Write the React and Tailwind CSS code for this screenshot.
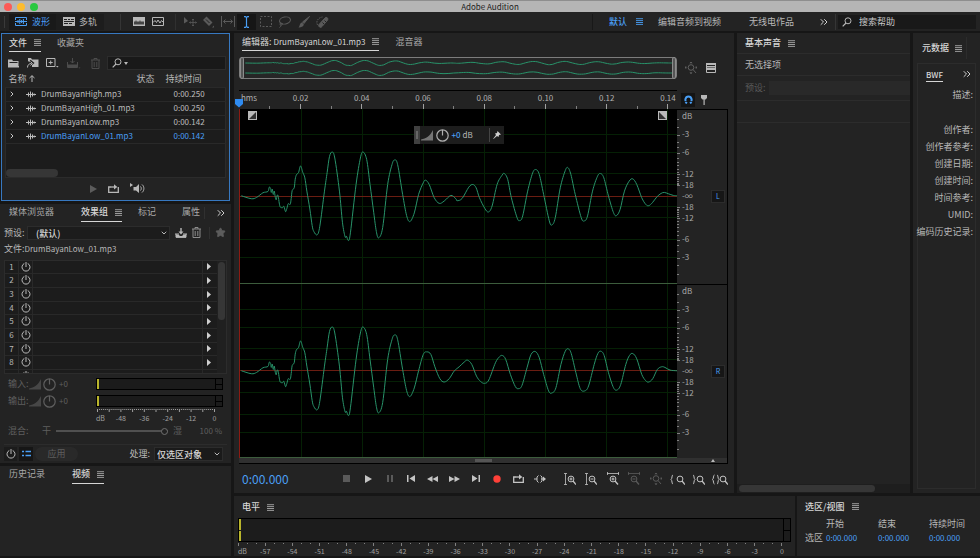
import React, { useState } from "react";
import { ChevronDown, ChevronRight, ChevronsRight, Star } from "lucide-react";
import clsx from "clsx";

// Sample points of the clip: [time, amplitude], full scale is +-262
const ATTACK = [
  [4, 0], [34, 9], [50, 5], [69, -9], [84, -13], [88, -26], [92, -22], [94, -10], [97, -20],
  [100, -4], [103, -14], [106, 4], [109, 12], [112, -2], [115, 2], [118, 22], [121, 34],
  [128, 36], [132, 32], [137, 48], [141, 38], [145, 24], [151, 26], [154, 8], [157, -16],
  [163, -24], [166, -50], [170, -64], [176, -70], [182, -90], [189, -70], [195, -54],
  [201, -14], [210, 40], [217, 90], [222, 108], [232, 118], [240, 92], [254, -14], [262, -70],
  [269, -118], [277, -132], [285, -114], [299, -14], [308, 80], [316, 124], [320, 122],
  [326, 135], [332, 112], [349, -34], [362, -114], [370, -132], [381, -109], [391, -34],
  [402, 50], [410, 108], [417, 127], [429, 96], [444, -34], [457, -94], [465, -108],
  [474, -94], [489, -4], [501, 60], [511, 78], [524, 52]
];

const LEFT = [
  ...ATTACK,
  [537, -4], [551, -39], [558, -47], [569, -34], [584, 6], [599, 23], [614, 16], [634, -1],
  [649, 9], [653, 15], [668, 8], [688, -26], [700, -34], [710, -24], [720, 6], [736, 38],
  [747, 49], [758, 31], [773, -34], [788, -62], [795, -67], [805, -49], [816, 6], [833, 66],
  [841, 75], [850, 61], [865, -14], [880, -69], [890, -79], [900, -64], [913, -4], [930, 76],
  [938, 88], [948, 66], [963, -24], [978, -76], [986, -85], [995, -64], [1008, -4], [1026, 66],
  [1035, 76], [1045, 61], [1060, -14], [1075, -59], [1084, -67], [1094, -54], [1108, 1],
  [1123, 51], [1132, 60], [1143, 41], [1156, -14], [1170, -44], [1181, -51], [1193, -34],
  [1208, 6], [1220, 26], [1229, 30], [1240, 21], [1253, 4], [1266, -7], [1276, -10],
  [1288, -6], [1303, -1], [1314, 0]
];

const RIGHT = [
  ...ATTACK,
  [537, 0], [551, -49], [562, -57], [574, -49], [586, -12], [601, 24], [614, 34], [629, 24],
  [644, 1], [659, -12], [674, -26], [684, -32], [697, -19], [711, 16], [723, 32], [735, 38],
  [748, 28], [768, -24], [780, -42], [789, -46], [799, -34], [813, 11], [828, 48], [838, 54],
  [848, 44], [863, -9], [875, -49], [888, -58], [900, -39], [913, 11], [928, 61], [938, 67],
  [950, 51], [965, -19], [978, -59], [987, -66], [996, -52], [1010, 6], [1023, 54], [1036, 61],
  [1048, 46], [1065, -19], [1076, -52], [1085, -59], [1095, -46], [1108, 6], [1123, 51],
  [1134, 58], [1145, 41], [1160, -19], [1171, -46], [1181, -52], [1193, -36], [1208, 11],
  [1220, 30], [1229, 34], [1241, 24], [1255, -4], [1268, -12], [1278, -10], [1293, -2], [1314, 0]
];

const FILES = [
  { name: "DrumBayanHigh.mp3", duration: "0:00.250" },
  { name: "DrumBayanHigh_01.mp3", duration: "0:00.250" },
  { name: "DrumBayanLow.mp3", duration: "0:00.142" },
  { name: "DrumBayanLow_01.mp3", duration: "0:00.142" }
];

const META_FIELDS = ["创作者:", "创作者参考:", "创建日期:", "创建时间:", "时间参考:", "UMID:", "编码历史记录:"];

const TIMES = ["0.02", "0.04", "0.06", "0.08", "0.10", "0.12", "0.14"];
const timeX = (i) => `${((i * 183.7 + 1) / 1314) * 100}%`;

const gain = (db) => Math.pow(10, db / 20);

// Catmull-Rom through the samples
function toPath(points) {
  let d = `M${points[0][0]} ${points[0][1]}`;
  for (let i = 0; i < points.length - 1; i++) {
    const p0 = points[i - 1] || points[i];
    const p1 = points[i];
    const p2 = points[i + 1];
    const p3 = points[i + 2] || p2;
    d += `C${p1[0] + (p2[0] - p0[0]) / 6} ${p1[1] + (p2[1] - p0[1]) / 6} ${p2[0] - (p3[0] - p1[0]) / 6} ${p2[1] - (p3[1] - p1[1]) / 6} ${p2[0]} ${p2[1]}`;
  }
  return d;
}

/* ---------- icons ---------- */

function Icon({ w = 12, h = 12, className, children }) {
  return (
    <svg
      width={w}
      height={h}
      viewBox={`0 0 ${w} ${h}`}
      fill="none"
      stroke="currentColor"
      strokeWidth="1"
      className={clsx("shrink-0", className)}
      aria-hidden="true"
    >
      {children}
    </svg>
  );
}

const MenuIcon = ({ className }) => (
  <Icon w={7} h={7} className={className}>
    <path d="M0 .7h7M0 2.6h7M0 4.5h7M0 6.4h7" strokeWidth=".9" />
  </Icon>
);

const WaveformIcon = () => (
  <Icon w={12} h={9}>
    <path d="M.5 3V.5h11V3M.5 6v2.500h11V6M0 4.500h12M3 3v3M4.800 2v5M6.600 3v3M8.400 2v5" />
  </Icon>
);

const MultitrackIcon = () => (
  <Icon w={12} h={9}>
    <path d="M0 0h12v9H0z" fill="currentColor" stroke="none" />
    <path d="M1 2.500h3M5 2.500h2M8 2.500h3M1 4.500h10M1 6.500h4M6 6.500h3" stroke="#222" />
  </Icon>
);

const SpectralIcon = () => (
  <Icon w={12} h={9}>
    <path d="M0 0h12v9H0z" fill="currentColor" stroke="none" />
    <path d="M1 7.500V4l1 1 1-2 1 2 1-1 1 1 1-2 1 2 1-1 1 1 1-1v3.500z" fill="#444" stroke="none" />
  </Icon>
);

const PitchIcon = () => (
  <Icon w={12} h={9}>
    <path d="M.5.5h11v8H.5zM1 5.500l2-2 1.500 2L6 3l2 3 1.500-2.500L11 5" />
  </Icon>
);

const MoveIcon = () => (
  <Icon w={14} h={11}>
    <path d="M1 1l4 4-4 2.500z" fill="currentColor" stroke="none" />
    <path d="M10 3v7M6.500 6.500h7M9 4l1-1 1 1M9 9l1 1 1-1M7.500 5.500l-1 1 1 1M12.500 5.500l1 1-1 1" strokeWidth=".8" />
  </Icon>
);

const RazorIcon = () => (
  <Icon w={13} h={12}>
    <path d="M1 4l3.500-3.500 6 6L7 10z" fill="currentColor" stroke="none" />
    <path d="M4 3.500l3.500 3.500" stroke="#222" />
    <path d="M10 11.500h2V9.500z" fill="currentColor" stroke="none" />
  </Icon>
);

const SlipIcon = () => (
  <Icon w={14} h={11}>
    <path d="M.5 0v11M13.500 0v11M2.500 5.500h9M4.500 3.500l-2 2 2 2M9.500 3.500l2 2-2 2" />
  </Icon>
);

const CursorIcon = () => (
  <Icon w={7} h={12}>
    <path d="M1 .7h1.500l1 1 1-1H6M1 11.300h1.500l1-1 1 1H6M3.500 1.500v9" strokeWidth="1.200" />
  </Icon>
);

const MarqueeIcon = () => (
  <Icon w={12} h={11}>
    <path d="M.5.5h11v10H.5z" strokeDasharray="2 1.500" />
  </Icon>
);

const LassoIcon = () => (
  <Icon w={13} h={12}>
    <ellipse cx="7" cy="4.500" rx="5.500" ry="3.500" transform="rotate(-12 7 4.500)" />
    <path d="M3.500 7c-2 0-2 2-.5 2s1.500-1 1-2M3 9c0 1-.5 2-1.500 2.500" />
  </Icon>
);

const BrushIcon = () => (
  <Icon w={12} h={12}>
    <path d="M11.500.5L6 7.500 4.500 6z" fill="currentColor" />
    <path d="M4 6.500L5.800 8.300C5.500 11 2.500 11.500.5 11.500 2 10 1.500 7 4 6.500z" fill="currentColor" stroke="none" />
  </Icon>
);

const HealIcon = () => (
  <Icon w={13} h={12}>
    <path d="M3 8.500l6-6.500a1.500 1.500 0 0 1 2.500 2.200L6 10.500A1.500 1.500 0 0 1 3 8.500z" fill="currentColor" />
    <path d="M6.500 6.500l1.500 1.500M8.500 4.500l1.500 1.500" stroke="#222" />
    <path d="M1.500 9c-2-4 1-7.500 5-8" strokeDasharray="1.500 1" />
  </Icon>
);

const SearchIcon = () => (
  <Icon w={10} h={10}>
    <circle cx="6" cy="3.800" r="3" />
    <path d="M4 6L.7 9.300" strokeWidth="1.200" />
  </Icon>
);

const FolderIcon = () => (
  <Icon w={11} h={9}>
    <path d="M0 8.500V.5h4l1 1.500h5.500v5H11v1.500z" fill="currentColor" stroke="none" />
    <path d="M1.500 3.500h8" stroke="#222" />
  </Icon>
);

const ImportIcon = () => (
  <Icon w={12} h={10}>
    <path d="M1 0h3l1 1.500h6.500V9H5V6l-4-3z" fill="currentColor" stroke="none" />
    <path d="M0 9.500c0-3 2-4.500 4.500-4.500M3 2.500l3 2.500-3 2.500" stroke="#222" strokeWidth="2" />
    <path d="M.5 9.500c0-2.500 1.500-4 4-4M3.500 3.500l2 2-2 2" />
  </Icon>
);

const NewIcon = () => (
  <Icon w={13} h={10}>
    <path d="M.5.5h8.500v8H.5zM4.700 2.500v4M2.700 4.500h4" />
    <path d="M10 8h2.600l-1.300 1.500z" fill="currentColor" stroke="none" />
  </Icon>
);

const InsertIcon = () => (
  <Icon w={14} h={11}>
    <path d="M.5 4v5.500h10V4M0 7h11M5.500 0v5M3.500 3l2 2 2-2" />
    <path d="M1 7h9v2.500H1zM11.500 9.500h2l-1 1z" fill="currentColor" stroke="none" />
  </Icon>
);

const TrashIcon = () => (
  <Icon w={9} h={11}>
    <path d="M0 2h9M3 2V.5h3V2M1 2v8.500h7V2M3.200 4v5M5.800 4v5" />
  </Icon>
);

const ClipIcon = () => (
  <Icon w={10} h={7} className="text-[#bcbcbc]">
    <path d="M0 3.500h10M2.500 1.500v4M4.500 .5v6M6.500 1.500v4M8.200 2.500v2" />
  </Icon>
);

const LoopIcon = () => (
  <Icon w={11} h={9}>
    <path d="M3 3H.7v5.300h9.600V3" strokeWidth="1.300" />
    <path d="M3 3h4" strokeWidth="1.300" />
    <path d="M6 .3L9.300 3 6 5.500z" fill="currentColor" stroke="none" />
  </Icon>
);

const AutoPlayIcon = () => (
  <Icon w={15} h={11}>
    <path d="M0 0l3 2-3 2zM3.500 4H6l3-3v9L6 7.500H3.500z" fill="currentColor" stroke="none" />
    <path d="M10.500 3.500c1 1 1 3 0 4M12 1.500c2.500 2 2.500 6 0 8" />
  </Icon>
);

const SaveIcon = () => (
  <Icon w={12} h={10}>
    <path d="M1 6v3.300h10V6M0 6h4M8 6h4" />
    <path d="M1 6.500h2.500L5 8h2l1.500-1.500H11v3H1zM3.500 3.500h5L6 6.500zM5.300 0h1.400v4H5.300z" fill="currentColor" stroke="none" />
  </Icon>
);

const PowerIcon = () => (
  <Icon w={10} h={10}>
    <path d="M3.300 1.500a4 4 0 1 0 3.400 0M5 0v5" />
  </Icon>
);

const ListIcon = () => (
  <Icon w={9} h={7}>
    <path d="M0 1.500h2M3.500 1.500H9M0 5.500h2M3.500 5.500H9" strokeWidth="1.500" />
  </Icon>
);

const RampIcon = () => (
  <Icon w={12} h={11}>
    <path d="M0 10.500V9.500C5 8.500 9 6 12 0v10.500z" fill="currentColor" stroke="none" opacity=".6" />
  </Icon>
);

const KnobIcon = () => (
  <Icon w={13} h={13}>
    <circle cx="6.500" cy="6.500" r="5.700" strokeWidth="1.200" />
    <path d="M6.500 1v5.500" strokeWidth="1.200" />
  </Icon>
);

const ZoomAllIcon = () => (
  <Icon w={12} h={12}>
    <circle cx="6" cy="5.500" r="2.800" />
    <path d="M8 7.500l3 3.500M6 0v1.500M4.800 1L6 0l1.200 1M0 5.500h1.500M1 4.300L0 5.500l1 1.200M12 5.500h-1.500M11 4.300l1 1.200-1 1.200M6 11.500V10M4.800 10.500l1.200 1 1.200-1" />
  </Icon>
);

const ChannelListIcon = () => (
  <Icon w={10} h={10}>
    <path d="M.5.5h9v9h-9zM0 3.500h10M0 6.500h10" />
    <path d="M0 0h10v2H0zM0 4.500h10V6H0z" fill="currentColor" stroke="none" />
  </Icon>
);

const MagnetIcon = () => (
  <Icon w={9} h={9}>
    <path d="M2.800 8.500C.5 6 1 1.500 4.500 1.500S8.500 6 6.200 8.500" strokeWidth="2" />
    <path d="M0 6.500h9" stroke="#111" strokeWidth=".7" />
  </Icon>
);

const MarkerIcon = () => (
  <Icon w={6} h={10}>
    <path d="M0 0h6v3L4.500 4.500h-3L0 3zM2.500 4.500h1.200V10H2.500z" fill="currentColor" stroke="none" />
  </Icon>
);

const PinIcon = () => (
  <Icon w={8} h={8}>
    <path d="M4.500 0L8 3.500 6 4l-.5 2L4 5 .5 8l-.3-.3L3 4 2 2.500 4 2z" fill="currentColor" stroke="none" />
  </Icon>
);

const FadeIcon = ({ flip }) => (
  <Icon w={9} h={9} className={flip ? "-scale-x-100" : ""}>
    <path d="M0 0h9v9H0z" fill="#b9b9b9" stroke="none" />
    <path d="M8 1v7H1z" fill="#333" stroke="none" />
  </Icon>
);

// Magnifier used by the zoom buttons, sign is "+" or "-"
const Lens = ({ x = 6, sign }) => (
  <g>
    <circle cx={x} cy="6" r="2.900" />
    <path d={`M${x + 2} 8l3 3.500`} strokeWidth="1.300" />
    {sign && <path d={`M${x - 1.5} 6h3`} />}
    {sign === "+" && <path d={`M${x} 4.500v3`} />}
  </g>
);

const TRANSPORT = [
  { label: "停止", dim: true, icon: <Icon w={7} h={7}><path d="M0 0h7v7H0z" fill="currentColor" stroke="none" /></Icon> },
  { label: "播放", icon: <Icon w={7} h={8}><path d="M0 0l7 4-7 4z" fill="currentColor" stroke="none" /></Icon> },
  { label: "暂停", dim: true, icon: <Icon w={6} h={7}><path d="M0 0h2v7H0zM4 0h2v7H4z" fill="currentColor" stroke="none" /></Icon> },
  { label: "上一个", icon: <Icon w={8} h={7}><path d="M0 0h1.500v7H0zM8 0v7L2.500 3.500z" fill="currentColor" stroke="none" /></Icon> },
  { label: "快退", icon: <Icon w={11} h={6}><path d="M5.500 0v6L0 3zM11 0v6L5.500 3z" fill="currentColor" stroke="none" /></Icon> },
  { label: "快进", icon: <Icon w={11} h={6}><path d="M0 0v6l5.500-3zM5.500 0v6L11 3z" fill="currentColor" stroke="none" /></Icon> },
  { label: "下一个", icon: <Icon w={8} h={7}><path d="M6.500 0H8v7H6.500zM0 0v7l5.500-3.500z" fill="currentColor" stroke="none" /></Icon> },
  { label: "录制", icon: <Icon w={8} h={8} className="text-[#ff4038]"><circle cx="4" cy="4" r="3.700" fill="currentColor" stroke="none" /></Icon> },
  { label: "循环播放", icon: <LoopIcon /> },
  { label: "跳过所选项目", icon: <Icon w={12} h={8}><path d="M0 4h3M4.500.5L3 2v4l1.500 1.500M6.500.5L8 2v4L6.500 7.500M7 4h4" /><path d="M9 1.500L12 4 9 6.500z" fill="currentColor" stroke="none" /></Icon> }
];

const ZOOMS = [
  { label: "放大(振幅)", icon: <Icon><path d="M1.500.5v11M0 .5h3M0 11.500h3" strokeWidth=".8" /><Lens x={7} sign="+" /></Icon> },
  { label: "缩小(振幅)", icon: <Icon><path d="M1.500.5v11M0 .5h3M0 11.500h3" strokeWidth=".8" /><Lens x={7} sign="-" /></Icon> },
  { label: "放大(时间)", icon: <Icon h={13}><path d="M0 1.500h12M.5 0v3M11.500 0v3" strokeWidth=".8" /><g transform="translate(0 1)"><Lens sign="+" /></g></Icon> },
  { label: "缩小(时间)", dim: true, icon: <Icon h={13}><path d="M0 1.500h12M.5 0v3M11.500 0v3" strokeWidth=".8" /><g transform="translate(0 1)"><Lens sign="-" /></g></Icon> },
  { label: "全部缩小", dim: true, icon: <ZoomAllIcon /> },
  { label: "放大入点", icon: <Icon w={15}><path d="M3 2C1.500 2 2.500 5.500 1 6.500c1.500 1 .5 4.500 2 4.500" /><Lens x={10} /></Icon> },
  { label: "放大出点", icon: <Icon w={13}><path d="M1 2c1.500 0 .5 3.500 2 4.500-1.500 1-.5 4.500-2 4.500" /><Lens x={8} /></Icon> },
  { label: "缩放至选区", icon: <Icon w={16}><path d="M2.500 2C1 2 2 5.500.5 6.500 2 7.500 1 11 2.500 11M5 2c1.500 0 .5 3.500 2 4.500-1.500 1-.5 4.500-2 4.500" /><Lens x={11} /></Icon> }
];

/* ---------- shared bits ---------- */

function Tab({ active, light, children }) {
  return (
    <button
      className={clsx(
        "flex h-[18px] items-center gap-[7px] border-b whitespace-nowrap",
        active ? "border-[#d6d6d6] text-[#d6d6d6]" : "border-transparent text-[#a8a8a8]",
        active && !light && "font-medium"
      )}
    >
      {children}
      {active && <MenuIcon className="text-[#a8a8a8]" />}
    </button>
  );
}

function Panel({ className, children }) {
  return <section className={clsx("flex min-w-0 flex-col bg-[#232323]", className)}>{children}</section>;
}

/* ---------- top bars ---------- */

const TOOLS = [
  { label: "移动工具", icon: <MoveIcon /> },
  { label: "切断所选剪辑工具", icon: <RazorIcon /> },
  { label: "滑动工具", icon: <SlipIcon /> },
  { label: "时间选择工具", icon: <CursorIcon />, active: true },
  { label: "框选工具", icon: <MarqueeIcon /> },
  { label: "套索选择工具", icon: <LassoIcon /> },
  { label: "画笔选择工具", icon: <BrushIcon /> },
  { label: "污点修复画笔工具", icon: <HealIcon /> }
];

function TitleBar() {
  return (
    <header className="grid h-3 shrink-0 grid-cols-[1fr_auto_1fr] items-center border-t border-[#8e8e8e] bg-[#b5b5b5]">
      <div className="flex gap-[5px] pl-1">
        <span className="size-2 rounded-full bg-[#fc5b57]" />
        <span className="size-2 rounded-full bg-[#fdbc2e]" />
        <span className="size-2 rounded-full bg-[#28c840]" />
      </div>
      <h1 className="text-[8px] leading-[11px] text-[#1c1c1c]">Adobe Audition</h1>
    </header>
  );
}

function Toolbar() {
  return (
    <nav className="flex h-[19px] shrink-0 items-center bg-[#232323] pr-1 pl-1">
      <span className="mr-1 h-3 w-px bg-[#3a3a3a]" />
      <button className="flex h-4 w-[47px] items-center justify-center gap-[5px] bg-[#191919] text-[#4a9ff5]">
        <WaveformIcon />
        波形
      </button>
      <button className="flex h-4 w-[48px] items-center justify-center gap-1 bg-[#1d1d1d]">
        <MultitrackIcon />
        多轨
      </button>
      <span className="mr-2 ml-4 h-4 w-px bg-[#353535]" />
      <button aria-label="频谱频率显示" className="flex w-[19px] justify-center"><SpectralIcon /></button>
      <button aria-label="频谱音调显示" className="flex w-[19px] justify-center"><PitchIcon /></button>
      <span className="mr-1 ml-2 h-4 w-px bg-[#303030]" />
      {TOOLS.map((tool) => (
        <button
          key={tool.label}
          aria-label={tool.label}
          className={clsx(
            "flex h-4 w-[19px] items-center justify-center",
            tool.active ? "bg-[#161616] text-[#4a9ff5]" : "text-[#5a5a5a]"
          )}
        >
          {tool.icon}
        </button>
      ))}
      <div className="flex-1" />
      <span className="mr-4 h-4 w-px bg-[#181818]" />
      <button className="mr-[15px] flex items-center gap-[9px] font-medium text-[#4a9ff5]">
        默认 <MenuIcon />
      </button>
      <button className="mr-7">编辑音频到视频</button>
      <button className="mr-6">无线电作品</button>
      <button aria-label="更多工作区"><ChevronsRight className="size-3 text-[#d0d0d0]" /></button>
      <span className="mr-[2px] ml-[5px] h-4 w-px bg-[#353535]" />
      <label className="flex h-[14px] w-[138px] items-center gap-[7px] bg-[#191919] pl-1">
        <SearchIcon />
        <input
          aria-label="搜索帮助"
          placeholder="搜索帮助"
          className="w-full bg-transparent outline-none placeholder:text-[#c8c8c8]"
        />
      </label>
    </nav>
  );
}

/* ---------- left column ---------- */

function FilesPanel() {
  const [selected, setSelected] = useState("DrumBayanLow_01.mp3");

  return (
    <Panel className="mx-px border border-[#3778c0] px-[3px]">
      <div className="flex gap-4 pl-1">
        <Tab active>文件</Tab>
        <Tab>收藏夹</Tab>
      </div>
      <div className="mt-1 flex h-[14px] items-center pl-[3px]">
        <button aria-label="打开文件" className="w-[19px]"><FolderIcon /></button>
        <button aria-label="导入文件" className="w-[19px]"><ImportIcon /></button>
        <button aria-label="新建文件" className="w-[21px]"><NewIcon /></button>
        <button aria-label="插入到多轨混音" className="w-6 text-[#4c4c4c]"><InsertIcon /></button>
        <button aria-label="关闭所选文件" className="w-4 text-[#4c4c4c]"><TrashIcon /></button>
        <label className="flex h-[14px] flex-1 items-center gap-[2px] border border-[#2c2c2c] bg-[#191919] pl-1">
          <SearchIcon />
          <Icon w={4} h={3}><path d="M0 0h4L2 3z" fill="currentColor" stroke="none" /></Icon>
          <input aria-label="搜索文件" className="w-full bg-transparent outline-none" />
        </label>
      </div>
      <table className="mt-px w-full table-fixed border-collapse text-left">
        <colgroup>
          <col />
          <col className="w-[29px]" />
          <col className="w-[60px]" />
        </colgroup>
        <thead>
          <tr className="h-4">
            <th className="p-0 pl-[3px] font-normal">
              <span className="flex items-center gap-[2px]">
                名称
                <Icon w={6} h={7}><path d="M3 7V.7M.5 3L3 .7 5.500 3" /></Icon>
              </span>
            </th>
            <th className="p-0 font-normal">状态</th>
            <th className="p-0 font-normal">持续时间</th>
          </tr>
        </thead>
        <tbody className="border-x border-[#2b2b2b] bg-[#1c1c1c]">
          {FILES.map((file) => (
            <tr
              key={file.name}
              onClick={() => setSelected(file.name)}
              className={clsx(
                "h-[14px] border-y border-[#292929] text-[8px] leading-[12px]",
                selected === file.name ? "text-[#4a9ff5]" : "text-[#bcbcbc]"
              )}
            >
              <td className="p-0">
                <span className="flex items-center">
                  <ChevronRight className="mr-[10px] ml-[2px] size-2 text-[#c8c8c8]" strokeWidth={3} />
                  <ClipIcon />
                  <span className="ml-[5px]">{file.name}</span>
                </span>
              </td>
              <td className="p-0" />
              <td className="p-0 pl-2">{file.duration}</td>
            </tr>
          ))}
        </tbody>
      </table>
      <div className="flex h-[34px] items-end border-x border-b border-[#2b2b2b] bg-[#1c1c1c]">
        <span className="h-2 w-[52px] rounded-full bg-[#363636]" />
      </div>
      <div className="flex h-[22px] items-center justify-center gap-[11px] pl-1">
        <button aria-label="播放" className="text-[#5c5c5c]">
          <Icon w={7} h={8}><path d="M0 0l7 4-7 4z" fill="currentColor" stroke="none" /></Icon>
        </button>
        <button aria-label="循环播放"><LoopIcon /></button>
        <button aria-label="自动播放"><AutoPlayIcon /></button>
      </div>
    </Panel>
  );
}

function RackMeter() {
  return (
    <div className="flex h-3 flex-1 border border-black bg-[#1b1b1b]">
      <span className="w-[2px] bg-[#b9b52c]" />
      <span className="ml-auto flex w-[7px] flex-col border-l border-black">
        <span className="flex-1 border-b border-black" />
        <span className="flex-1" />
      </span>
    </div>
  );
}

function RackLevel({ label }) {
  return (
    <div className="flex h-[17px] items-center text-[#5f5f5f]">
      <span className="w-[21px]">{label}</span>
      <RampIcon />
      <span className="ml-[2px]"><KnobIcon /></span>
      <span className="ml-[3px] w-[37px] text-[8px]">+0</span>
      <RackMeter />
    </div>
  );
}

function EffectsPanel() {
  const ticks = Array.from({ length: 61 }, (_, i) => i);

  return (
    <Panel className="px-1">
      <div className="flex items-center pl-[5px]">
        <Tab>媒体浏览器</Tab>
        <span className="w-[27px]" />
        <Tab active>效果组</Tab>
        <span className="w-4" />
        <Tab>标记</Tab>
        <span className="w-[26px]" />
        <Tab>属性</Tab>
        <span className="ml-1 h-3 w-px bg-[#303030]" />
        <button aria-label="更多面板" className="ml-auto"><ChevronsRight className="size-3 text-[#d0d0d0]" /></button>
      </div>

      <div className="mt-1 flex h-[14px] items-center">
        <label htmlFor="preset" className="w-[23px]">预设:</label>
        <div className="relative w-[143px]">
          <select
            id="preset"
            className="block h-[14px] w-full appearance-none border border-[#2c2c2c] bg-[#1c1c1c] pl-2 font-medium text-[#d6d6d6]"
          >
            <option>(默认)</option>
          </select>
          <ChevronDown className="pointer-events-none absolute top-[3px] right-[2px] size-2" strokeWidth={3} />
        </div>
        <button aria-label="保存预设" className="ml-[5px]"><SaveIcon /></button>
        <button aria-label="删除预设" className="ml-[5px] text-[#8c8c8c]"><TrashIcon /></button>
        <span className="ml-2 h-3 w-px bg-[#303030]" />
        <button aria-label="收藏" className="ml-[5px] text-[#5c5c5c]"><Star className="size-[11px] fill-current" /></button>
      </div>

      <p className="mt-[2px] h-[14px] leading-[14px]">
        文件:<span className="text-[8px]">DrumBayanLow_01.mp3</span>
      </p>

      <div className="mt-1 flex h-[114px] overflow-hidden border border-[#2c2c2c] bg-[#1c1c1c]">
        <ol className="grid h-[123px] flex-1 auto-rows-fr">
          {[1, 2, 3, 4, 5, 6, 7, 8, 9].map((n) => (
            <li key={n} className="flex items-stretch border-b border-[#292929] text-[8px] leading-[12px]">
              <span className="w-[14px] border-r border-[#292929] text-center">{n < 9 && n}</span>
              <button aria-label={`切换效果 ${n}`} className="flex w-[14px] items-center justify-center border-r border-[#292929]">
                <PowerIcon />
              </button>
              <span className="flex-1" />
              <button aria-label={`选择效果 ${n}`} className="flex w-[15px] items-center border-l border-[#292929] pl-1 text-[#d0d0d0]">
                <Icon w={4} h={7}><path d="M0 0l4 3.500L0 7z" fill="currentColor" stroke="none" /></Icon>
              </button>
            </li>
          ))}
        </ol>
        <div className="w-[9px] bg-[#202020] py-px">
          <div className="ml-px h-[58px] w-[7px] rounded-full bg-[#363636]" />
        </div>
      </div>

      <div className="mt-[2px] px-1">
        <RackLevel label="输入:" />
        <RackLevel label="输出:" />
      </div>

      <svg className="-mt-px ml-[86px] h-[14px] w-[136px] text-[7px]" fill="#a0a0a0" stroke="none">
        {ticks.map((i) => (
          <rect key={i} x={7 + i * 1.95} y="0" width="1" height={i % 6 === 0 ? 3 : 1} />
        ))}
        <text x="6" y="12">dB</text>
        {[-48, -36, -24, -12, 0].map((db) => (
          <text key={db} x={7.5 + (db + 60) * 1.95} y="12" textAnchor="middle">{db}</text>
        ))}
      </svg>

      <div className="flex h-[17px] items-center pl-1 text-[#5f5f5f]">
        <label htmlFor="mix" className="w-[34px]">混合:</label>
        <span>干</span>
        <input
          id="mix"
          type="range"
          defaultValue={100}
          className="mx-[5px] h-[2px] w-[112px] appearance-none bg-[#505050] [&::-webkit-slider-thumb]:size-[7px] [&::-webkit-slider-thumb]:appearance-none [&::-webkit-slider-thumb]:rounded-full [&::-webkit-slider-thumb]:border [&::-webkit-slider-thumb]:border-[#707070] [&::-webkit-slider-thumb]:bg-[#222222]"
        />
        <span>湿</span>
        <span className="ml-auto pr-[5px] text-[8px]">100 %</span>
      </div>

      <div className="mt-1 flex items-center border-t border-[#2c2c2c] py-[2px]">
        <button aria-label="启用效果组" className="flex h-[14px] w-[13px] items-center justify-center bg-[#1b1b1b]"><PowerIcon /></button>
        <button aria-label="列表视图" className="ml-[2px] flex h-[14px] w-[14px] items-center justify-center bg-[#161616] text-[#4a9ff5]"><ListIcon /></button>
        <button className="ml-[2px] h-[14px] w-[43px] rounded-full bg-[#292929] text-[#5f5f5f]">应用</button>
        <label htmlFor="process" className="ml-auto">处理:</label>
        <div className="relative mr-1 ml-1 w-[69px]">
          <select
            id="process"
            className="block h-[14px] w-full appearance-none border border-[#2c2c2c] bg-[#1a1a1a] pl-[2px] font-medium text-[#d6d6d6]"
          >
            <option>仅选区对象</option>
          </select>
          <ChevronDown className="pointer-events-none absolute top-[3px] right-[2px] size-2" strokeWidth={3} />
        </div>
      </div>
    </Panel>
  );
}

/* ---------- editor ---------- */

function Wave({ points }) {
  return (
    <svg viewBox="0 -262 1314 524" preserveAspectRatio="none" className="block h-full w-full" fill="none">
      <path d={toPath(points)} stroke="#28936a" strokeWidth="1" vectorEffect="non-scaling-stroke" />
    </svg>
  );
}

function Channel({ points }) {
  const lines = [-3, -6, -12, -18].flatMap((db) => [50 - gain(db) * 50, 50 + gain(db) * 50]);
  return (
    <div className="relative min-h-0 flex-1 overflow-hidden border-b border-[#3c5c3c]">
      <svg className="absolute inset-0 h-full w-full" shapeRendering="crispEdges">
        {lines.map((y) => (
          <line key={y} x1="0" x2="100%" y1={`${y}%`} y2={`${y}%`} stroke="#052005" />
        ))}
        {TIMES.map((t, i) => (
          <line key={t} x1={timeX(i + 1)} x2={timeX(i + 1)} y1="0" y2="100%" stroke="#052005" />
        ))}
      </svg>
      <div className="absolute inset-x-0 top-1/2 h-px bg-[#6b1d12]" />
      <div className="absolute inset-0">
        <Wave points={points} />
      </div>
    </div>
  );
}

function DbAxis({ channel }) {
  const minor = Array.from({ length: 18 }, (_, i) => -i - 1);
  const labels = [-3, -6, -12, -18];
  return (
    <div className="flex min-h-0 flex-1 items-center border-t border-r border-black">
      <svg className="h-full w-0 flex-1 self-stretch text-[8px]" fill="#a8a8a8">
        {minor.flatMap((db) =>
          [-1, 1].map((side) => (
            <line
              key={`${db}${side}`}
              x1="0"
              x2={labels.includes(db) ? 3 : 2}
              y1={`${50 + side * gain(db) * 50}%`}
              y2={`${50 + side * gain(db) * 50}%`}
              stroke="#808080"
              shapeRendering="crispEdges"
            />
          ))
        )}
        <text x="5" y="9">dB</text>
        {labels.flatMap((db) =>
          [-1, 1].map((side) => (
            <text key={`${db}${side}`} x="5" y={`${50 + side * gain(db) * 50}%`} dy="2">{db}</text>
          ))
        )}
        <text x="5" y="50%" dy="2">-∞</text>
      </svg>
      <button className="mr-[2px] h-[13px] w-[14px] border border-[#2c2c2c] bg-[#161616] text-[7px] leading-[11px] text-[#4a9ff5]">
        {channel}
      </button>
    </div>
  );
}

function TimeRuler() {
  return (
    <div className="relative h-full border-t border-black">
      <svg className="block h-full w-full text-[8px]" fill="#b0b0b0">
        {TIMES.map((t, i) => (
          <g key={t}>
            <line x1={timeX(i + 1)} x2={timeX(i + 1)} y1="13" y2="18" stroke="#a0a0a0" shapeRendering="crispEdges" />
            <line x1={timeX(i + 0.5)} x2={timeX(i + 0.5)} y1="15" y2="18" stroke="#808080" shapeRendering="crispEdges" />
            <text x={timeX(i + 1)} y="10" textAnchor="middle">{t}</text>
          </g>
        ))}
        <text x="2" y="10">hms</text>
      </svg>
      <svg className="absolute top-2 -left-1 z-10" width="9" height="9">
        <path d="M0 0h8v5L4 8.500 0 5z" fill="#2f8bf0" />
      </svg>
    </div>
  );
}

function GainHud() {
  return (
    <div className="absolute top-[17px] left-1/2 z-10 flex h-[18px] w-[90px] -translate-x-1/2 items-center bg-[#1d1d1d]">
      <span className="flex h-full w-[6px] items-center justify-center bg-[#404040]">
        <span className="h-2 w-[2px] border-x border-[#666666]" />
      </span>
      <span className="ml-px text-[#b0b0b0]"><RampIcon /></span>
      <span className="ml-[3px] text-[#b0b0b0]"><KnobIcon /></span>
      <span className="ml-[3px] text-[8px]"><b className="font-medium text-[#4a9ff5]">+0</b> dB</span>
      <span className="ml-auto h-[14px] w-px bg-[#444444]" />
      <button aria-label="固定" className="mx-[3px] text-[#d0d0d0]"><PinIcon /></button>
    </div>
  );
}

function IconButtons({ items, className }) {
  return (
    <div className={clsx("grid auto-cols-fr grid-flow-col", className)}>
      {items.map((item) => (
        <button
          key={item.label}
          aria-label={item.label}
          className={clsx("flex items-center justify-center", item.dim ? "text-[#5a5a5a]" : "text-[#c4c4c4]")}
        >
          {item.icon}
        </button>
      ))}
    </div>
  );
}

function EditorPanel() {
  return (
    <Panel className="flex-1">
      <div className="flex gap-4 pl-2">
        <Tab active light>编辑器: <span className="-ml-[5px] text-[8px]">DrumBayanLow_01.mp3</span></Tab>
        <Tab>混音器</Tab>
      </div>

      <div className="mt-[6px] mr-[6px] ml-[5px] grid min-h-0 flex-1 grid-cols-[1fr_51px] grid-rows-[22px_11px_19px_1fr_6px]">
        <div className="flex rounded-[3px] border border-[#7c7c7c] bg-[#262626]">
          <span className="-my-px w-1 rounded-[2px] border border-[#8c8c8c] bg-[#555555]" />
          <div className="grid min-w-0 flex-1 grid-rows-2">
            <div className="h-[10px]"><Wave points={LEFT} /></div>
            <div className="h-[10px]"><Wave points={RIGHT} /></div>
          </div>
          <span className="-my-px w-1 rounded-[2px] border border-[#8c8c8c] bg-[#555555]" />
        </div>
        <div className="flex items-center gap-[9px] pl-2">
          <button aria-label="缩放导航器" className="text-[#606060]"><ZoomAllIcon /></button>
          <button aria-label="显示通道"><ChannelListIcon /></button>
        </div>

        <div className="col-span-2" />

        <TimeRuler />
        <div className="flex items-center gap-[6px] pl-1">
          <button aria-label="对齐" className="flex h-[14px] w-[14px] items-center justify-center bg-[#141414] text-[#4a9ff5]"><MagnetIcon /></button>
          <button aria-label="添加标记"><MarkerIcon /></button>
        </div>

        <div className="relative flex min-h-0 flex-col border-l border-[#8c1a12] bg-black">
          <Channel points={LEFT} />
          <Channel points={RIGHT} />
          <button aria-label="淡入" className="absolute top-[2px] left-2"><FadeIcon /></button>
          <button aria-label="淡出" className="absolute top-[2px] right-[10px]"><FadeIcon flip /></button>
          <GainHud />
        </div>
        <div className="flex min-h-0 flex-col">
          <DbAxis channel="L" />
          <DbAxis channel="R" />
        </div>

        <div className="col-span-2 grid grid-cols-[1fr_auto_1fr] items-center border-r border-b border-black bg-[#303030]">
          <span />
          <span className="h-[3px] w-[17px] bg-[#555555]" />
          <Icon w={4} h={3} className="mr-3 justify-self-end"><path d="M0 3h4L2 0z" fill="currentColor" stroke="none" /></Icon>
        </div>
      </div>

      <div className="flex h-[29px] items-center justify-between pr-[3px] pl-2">
        <output className="text-[12px] leading-4 text-[#4a9ff5]">0:00.000</output>
        <div className="flex h-4 gap-2">
          <IconButtons items={TRANSPORT} className="w-[215px]" />
          <IconButtons items={ZOOMS} className="w-[172px]" />
        </div>
      </div>
    </Panel>
  );
}

/* ---------- right column ---------- */

function EssentialSoundPanel() {
  return (
    <Panel className="w-[173px] shrink-0">
      <h2 className="flex h-[21px] items-center gap-[7px] border-b border-[#2c2c2c] pl-2 font-medium text-[#d6d6d6]">
        基本声音 <MenuIcon className="text-[#a8a8a8]" />
      </h2>
      <p className="flex h-[22px] items-center border-b border-[#2c2c2c] pl-2">无选择项</p>
      <div className="flex h-[25px] items-center gap-[3px] border-b border-[#2c2c2c] pl-2 text-[#5a5a5a]">
        <label htmlFor="sound-preset" className="shrink-0">预设:</label>
        <input id="sound-preset" disabled className="h-[14px] w-full bg-[#292929]" />
      </div>
      <div className="h-[22px] border-b border-[#2c2c2c]" />
      <div className="mt-auto bg-[#1e1e1e] px-[2px] py-px">
        <div className="h-[7px] w-[136px] rounded-full bg-[#363636]" />
      </div>
    </Panel>
  );
}

function MetadataPanel() {
  return (
    <Panel className="w-[67px] shrink-0 px-1 pb-1">
      <div className="flex h-[30px] items-center">
        <h2 className="flex items-center gap-[6px] pl-[5px] font-medium whitespace-nowrap text-[#d6d6d6]">
          元数据 <MenuIcon className="text-[#a8a8a8]" />
        </h2>
        <span className="ml-1 h-[22px] w-px bg-[#2c2c2c]" />
      </div>
      <div className="flex flex-1 flex-col border border-[#2c2c2c] px-[2px]">
        <div className="flex h-[18px] items-end justify-between pl-[6px]">
          <button className="border-b border-[#d6d6d6] text-[8px] leading-[12px] font-medium text-[#d6d6d6]">BWF</button>
          <button aria-label="更多元数据" className="mb-[2px]"><ChevronsRight className="size-3 text-[#d0d0d0]" /></button>
        </div>
        <p className="mt-1 mb-[18px] text-right leading-[17px]">描述:</p>
        {META_FIELDS.map((field) => (
          <p key={field} className="self-end leading-[17px] whitespace-nowrap">{field}</p>
        ))}
      </div>
    </Panel>
  );
}

/* ---------- bottom row ---------- */

function LevelsPanel() {
  const marks = Array.from({ length: 21 }, (_, i) => -60 + i * 3);
  const pos = (db) => `${((db + 60) / 61) * 100}%`;
  return (
    <Panel className="flex-1 px-1">
      <h2 className="flex h-[22px] items-center gap-[7px] pl-1 font-medium text-[#d6d6d6]">
        电平 <MenuIcon className="text-[#a8a8a8]" />
      </h2>
      <div className="flex h-6 border border-black bg-[#1c1c1c]">
        <span className="flex w-[2px] flex-col gap-px">
          <span className="flex-1 bg-[#b9b52c]" />
          <span className="flex-1 bg-[#b9b52c]" />
        </span>
        <span className="ml-auto flex w-[7px] flex-col border-l border-black">
          <span className="flex-1 border-b border-black" />
          <span className="flex-1" />
        </span>
      </div>
      <svg className="mt-px h-[13px] w-full text-[7px]" fill="#a0a0a0">
        {Array.from({ length: 61 }, (_, i) => i - 60).map((db) => (
          <line key={db} x1={pos(db)} x2={pos(db)} y1="0" y2={db % 3 === 0 ? 3 : 1} stroke="#808080" shapeRendering="crispEdges" />
        ))}
        {marks.map((db) => (
          <text key={db} x={pos(db)} y="11" textAnchor={db === -60 ? "start" : "middle"}>
            {db === -60 ? "dB" : db}
          </text>
        ))}
      </svg>
    </Panel>
  );
}

function SelectionPanel() {
  return (
    <Panel className="w-[183px] shrink-0 pl-2">
      <h2 className="flex h-[21px] items-center gap-[7px] font-medium text-[#d6d6d6]">
        选区/视图 <MenuIcon className="text-[#a8a8a8]" />
      </h2>
      <table className="w-full table-fixed border-collapse text-left">
        <colgroup>
          <col className="w-[21px]" />
          <col className="w-[52px]" />
          <col className="w-[51px]" />
          <col />
        </colgroup>
        <thead>
          <tr className="h-[14px]">
            <td className="p-0" />
            <th className="p-0 font-normal">开始</th>
            <th className="p-0 font-normal">结束</th>
            <th className="p-0 font-normal">持续时间</th>
          </tr>
        </thead>
        <tbody>
          <tr className="h-[14px]">
            <th className="p-0 font-normal">选区</th>
            <td className="p-0 text-[8px] text-[#4a9ff5]">0:00.000</td>
            <td className="p-0 text-[8px] text-[#4a9ff5]">0:00.000</td>
            <td className="p-0 text-[8px] text-[#4a9ff5]">0:00.000</td>
          </tr>
        </tbody>
      </table>
    </Panel>
  );
}

export default function App() {
  return (
    <div className="flex h-screen flex-col bg-[#161616] font-['Noto_Sans_CJK_SC',sans-serif] text-[9px] leading-[14px] text-[#b8b8b8]">
      <TitleBar />
      <Toolbar />
      <main className="flex min-h-0 flex-1 gap-[3px] pt-[2px] pb-[2px]">
        <div className="flex w-[231px] shrink-0 flex-col gap-[3px]">
          <FilesPanel />
          <EffectsPanel />
          <Panel className="flex-1">
            <div className="flex gap-[27px] pl-[9px]">
              <Tab>历史记录</Tab>
              <Tab active>视频</Tab>
            </div>
          </Panel>
        </div>
        <div className="flex min-w-0 flex-1 flex-col gap-[3px]">
          <div className="flex min-h-0 flex-1 gap-[3px]">
            <EditorPanel />
            <EssentialSoundPanel />
            <MetadataPanel />
          </div>
          <div className="flex gap-[2px]">
            <LevelsPanel />
            <SelectionPanel />
          </div>
        </div>
      </main>
    </div>
  );
}
